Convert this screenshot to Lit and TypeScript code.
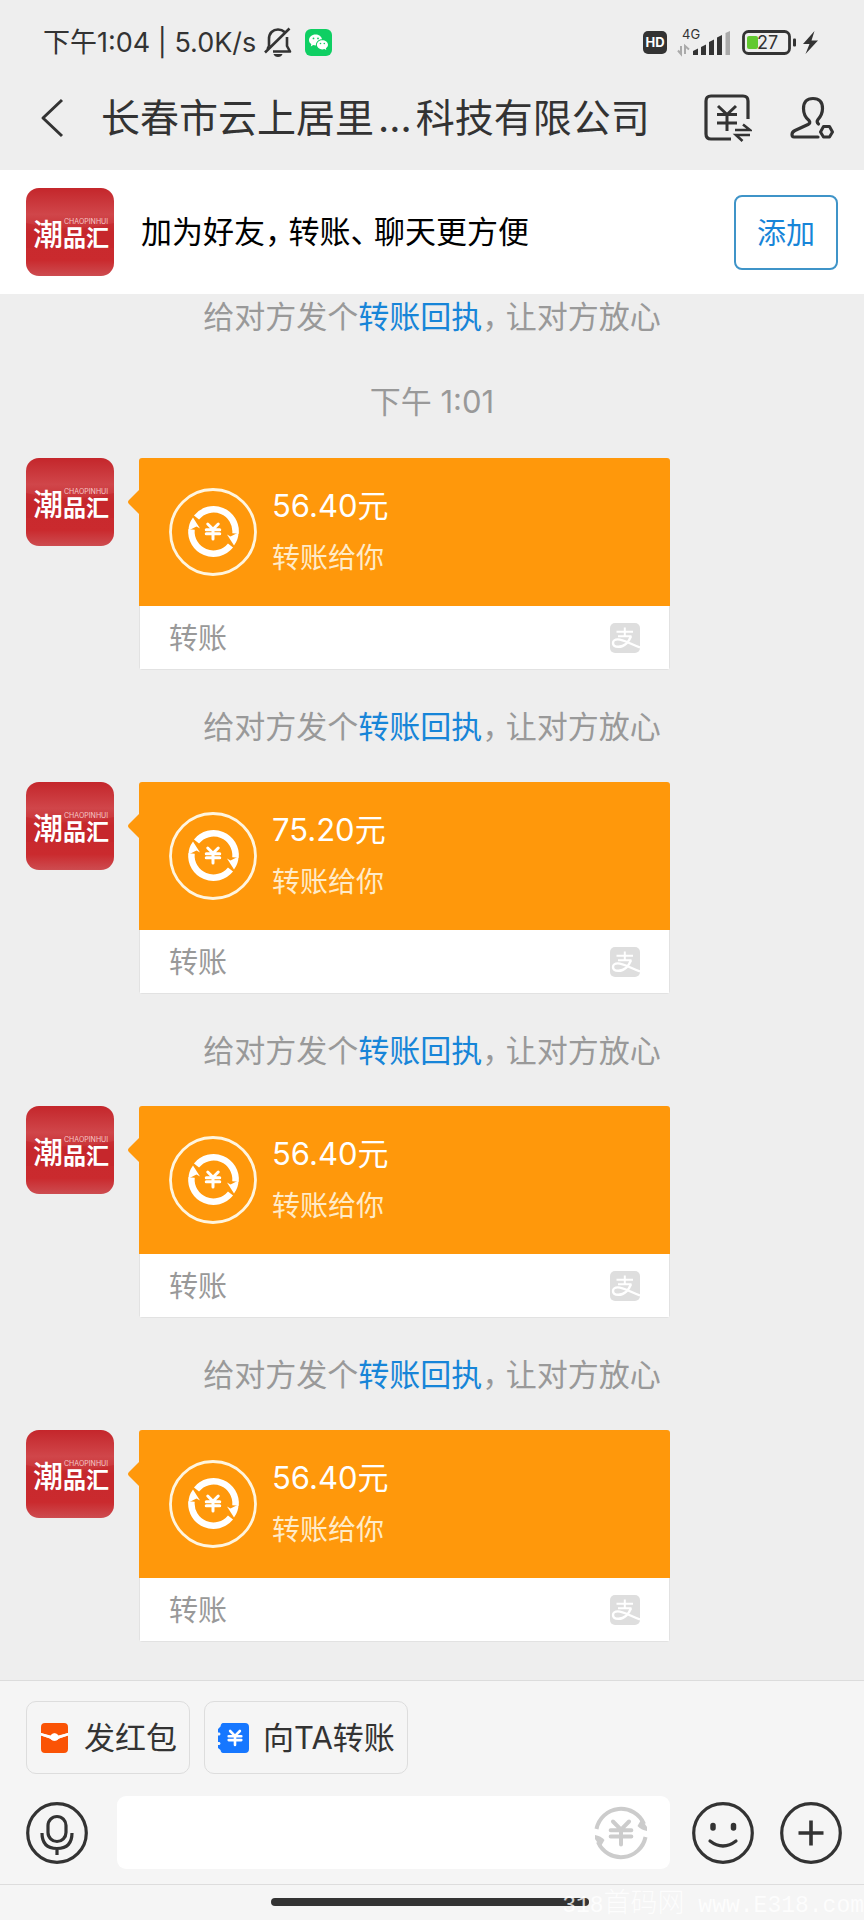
import { LitElement, html, css, svg } from "lit";
import { customElement, property, state } from "lit/decorators.js";

const yuan = (cx: number, cy: number, s: number, w: number) => svg`
  <path fill="none" stroke="currentColor" stroke-width=${w} stroke-linecap="round" stroke-linejoin="round"
    d="M${cx - 0.7 * s} ${cy - s}L${cx} ${cy - 0.3 * s}L${cx + 0.7 * s} ${cy - s}M${cx} ${cy - 0.3 * s}V${cy + s}M${cx - 0.9 * s} ${cy - 0.25 * s}H${cx + 0.9 * s}M${cx - 0.9 * s} ${cy + 0.3 * s}H${cx + 0.9 * s}"/>`;

@customElement("shop-avatar")
export class ShopAvatar extends LitElement {
  static styles = css`
    :host { display: block; flex: none; width: 88px; height: 88px; }
    svg { display: block; width: 100%; height: 100%; }
    .mark { fill: #fff; font-family: "Noto Sans CJK SC", sans-serif; }
    .tall { font-size: 30px; font-weight: 500; }
    .bold { font-size: 23px; font-weight: 700; }
    .latin { font-family: Inter, sans-serif; font-size: 7px; fill: #f6c9c9; }
  `;
  render() {
    return html`
      <svg viewBox="0 0 88 88" role="img" aria-label="潮品汇">
        <defs>
          <linearGradient id="base" x1="0" y1="0" x2="0" y2="1">
            <stop offset="0" stop-color="#c4262b" />
            <stop offset="0.3" stop-color="#d0464a" />
            <stop offset="0.42" stop-color="#cb383c" />
            <stop offset="0.5" stop-color="#c8292d" />
            <stop offset="0.82" stop-color="#ca2a2e" />
            <stop offset="1" stop-color="#cd4c50" />
          </linearGradient>
        </defs>
        <rect width="88" height="88" rx="13" fill="url(#base)" />
        <path d="M0 35Q44 46 88 35V60H0Z" fill="#c5262b" opacity="0.6" />
        <text class="mark tall" x="7" y="57">潮</text>
        <text class="mark bold" x="37" y="58">品</text>
        <text class="mark bold" x="60" y="58">汇</text>
        <text class="mark latin" x="38" y="36">CHAOPINHUI</text>
      </svg>`;
  }
}

@customElement("transfer-card")
export class TransferCard extends LitElement {
  @property() amount = "";
  static styles = css`
    :host { display: flex; align-items: flex-start; padding: 0 194px 0 26px; }
    .tail { display: block; flex: none; margin: 32px 0 0 14px; }
    .card { flex: 1; min-width: 0; border-radius: 3px; overflow: hidden; }
    .top { display: flex; align-items: center; gap: 15px; height: 148px; padding: 0 30px; background: #ff980b; color: #fff; }
    .top svg { display: block; flex: none; }
    .amount, .note { margin: 0; line-height: 53px; }
    .amount { font-size: 31px; }
    .note { font-size: 28px; color: #ffebc8; }
    .foot { display: flex; align-items: center; justify-content: space-between; height: 63px; padding: 0 29px; background: #fff;
      border: solid #e2e2e2; border-width: 0 1px 1px; box-sizing: content-box; font-size: 29px; line-height: 40px; color: #999; }
    .foot span { padding-top: 3px; }
    .foot svg { display: block; }
  `;
  render() {
    const half = svg`<path d="M-17 -14A22 22 0 0 1 22 2" fill="none" stroke="currentColor" stroke-width="6.5"/>
      <path d="M13.500 3L17 5L25 1Q25 8 20.500 14Z" fill="currentColor"/>`;
    return html`
      <shop-avatar></shop-avatar>
      <svg class="tail" width="11" height="24" viewBox="0 0 11 24"><path d="M11 0V24L1 14Q-1 12 1 10Z" fill="#ff980b" /></svg>
      <article class="card">
        <div class="top">
          <svg width="88" height="88" viewBox="0 0 88 88" aria-hidden="true">
            <circle cx="44" cy="44" r="42.500" fill="none" stroke="#fff5df" stroke-width="2.800" />
            <g transform="translate(44.500 43.500)">${half}<g transform="rotate(180)">${half}</g></g>
            ${yuan(44, 43.5, 7.5, 3)}
          </svg>
          <div>
            <p class="amount">${this.amount}元</p>
            <p class="note">转账给你</p>
          </div>
        </div>
        <div class="foot">
          <span>转账</span>
          <svg width="30" height="30" viewBox="0 0 30 30" aria-hidden="true">
            <rect width="30" height="30" rx="5" fill="#dedede" />
            <g fill="none" stroke="#fff" stroke-width="2">
              <path d="M6.500 8.800H23M14.800 4.500V13M8 13.300H21.500" />
              <path d="M21 13.300C19 18.500 14.500 23.800 8.500 23.800C4.500 23.800 3 21.800 3 19.900C3 17.900 5 16.400 7.800 16.400C13 16.400 18 19.800 30 24.500" stroke-width="2.400" />
            </g>
          </svg>
        </div>
      </article>`;
  }
}

@customElement("status-bar")
export class StatusBar extends LitElement {
  static styles = css`
    :host { display: flex; align-items: center; justify-content: space-between; height: 84px; padding: 0 46px 0 43px; color: #333; }
    .side { display: flex; align-items: center; }
    .clock { padding-top: 2px; font-size: 27px; line-height: 32px; white-space: pre; }
    svg { display: block; flex: none; overflow: visible; }
    .bell { margin: 0 12px 0 8px; }
    .hd { margin-right: 10px; }
    .signal { margin-right: 11px; }
    .battery { margin-right: 7px; }
    text { font-family: Inter, sans-serif; fill: #333; }
    .t-hd { font-size: 13px; font-weight: 700; fill: #fff; }
    .t-net { font-size: 13px; }
    .t-bat { font-size: 18px; }
  `;
  render() {
    return html`
      <div class="side">
        <span class="clock">下午1:04 | 5.0K/s</span>
        <svg class="bell" width="29" height="30" viewBox="0 0 29 30" fill="none" stroke="#333" stroke-width="2.600">
          <path d="M5 19V12C5 6 9 2.500 14 2.500C17 2.500 19 3.500 20.500 5M23 10V19L26 24.500H9M5 19L3.500 22M1 25.500L25.500 1.500" stroke-linejoin="round" />
          <path d="M9.500 27H18.500Q17.500 30 14 30Q10.500 30 9.500 27Z" fill="#333" stroke="none" />
        </svg>
        <svg width="27" height="27" viewBox="0 0 27 27" role="img" aria-label="微信">
          <rect width="27" height="27" rx="6" fill="#0fcf63" />
          <path d="M10.500 5.500C6.700 5.500 4 8 4 11C4 12.800 4.900 14.200 6.300 15.200L5.800 17.400L8.200 16.100C9 16.400 10 16.500 10.900 16.500C10.700 12.700 13.600 10.200 17 10.200C16.500 7.400 13.800 5.500 10.500 5.500Z" fill="#fff" />
          <path d="M17.300 11.200C14.200 11.200 11.900 13.300 11.900 15.800C11.900 18.400 14.300 20.400 17.300 20.400C18 20.400 18.700 20.300 19.400 20.100L21.300 21.100L20.900 19.300C22.200 18.400 23 17.200 23 15.800C23 13.300 20.500 11.200 17.300 11.200Z" fill="#fff" />
          <g fill="#0fcf63"><circle cx="8.500" cy="9.400" r="0.900" /><circle cx="13" cy="9.400" r="0.900" /><circle cx="15.500" cy="14.500" r="0.800" /><circle cx="19.300" cy="14.500" r="0.800" /></g>
        </svg>
      </div>
      <div class="side">
        <svg class="hd" width="24" height="23" viewBox="0 0 24 23">
          <rect width="24" height="23" rx="5" fill="#333" /><text class="t-hd" x="12" y="16.200" text-anchor="middle">HD</text>
        </svg>
        <svg class="signal" width="54" height="28" viewBox="0 0 54 28">
          <text class="t-net" x="5" y="11">4G</text>
          <path d="M4 18V26L1 22.500M8 26V18L12 21.500" fill="none" stroke="#aaa" stroke-width="2" />
          <g fill="#333"><path d="M16 27V23L21 20.500V27ZM24 27V19L29 16.500V27ZM32 27V14L37 11.500V27ZM40 27V9.500L45 7V27Z" /></g>
          <path d="M48.500 27V5L53 3V27Z" fill="#aaa" />
        </svg>
        <svg class="battery" width="54" height="25" viewBox="0 0 54 25">
          <rect x="1.500" y="1.500" width="46" height="22" rx="5" fill="none" stroke="#333" stroke-width="2.800" />
          <rect x="5" y="6" width="11" height="13" rx="2" fill="#62c930" />
          <rect x="51" y="8.500" width="3" height="8" rx="1" fill="#333" />
          <text class="t-bat" x="15" y="19">27</text>
        </svg>
        <svg width="15" height="23" viewBox="0 0 15 23"><path d="M11.500 0L0 13H6.500L2.500 23L15 9.500H8.500Z" fill="#333" /></svg>
      </div>`;
  }
}

@customElement("app-root")
export class AppRoot extends LitElement {
  @state() private amounts = ["56.40", "75.20", "56.40", "56.40"];

  static styles = css`
    :host { display: flex; flex-direction: column; position: relative; min-height: 100vh; overflow: hidden; background: #eee; color: #333;
      font-family: Inter, "Noto Sans CJK SC", sans-serif; }
    button { font: inherit; color: inherit; background: none; border: 0; padding: 0; cursor: pointer; }
    svg { display: block; flex: none; }
    .title-bar { display: flex; align-items: center; height: 68px; padding: 0 30px 18px 40px; }
    .title { flex: 1; min-width: 0; margin: 0 0 0 36px; font-size: 39px; font-weight: 400; line-height: 56px; white-space: nowrap; }
    .dots { margin: 0 4px; }
    .tools { display: flex; align-items: center; gap: 38px; }
    .friend { display: flex; align-items: center; height: 124px; padding: 0 26px; background: #fff; color: #000; }
    .friend p { flex: 1; margin: 0 0 0 27px; font-size: 31px; line-height: 44px; }
    .punct { font-feature-settings: "halt"; margin-right: 8px; }
    .add { box-sizing: border-box; height: 75px; padding: 0 21px 2px; border: 2px solid #3f94c8; border-radius: 8px; font-size: 29px; color: #1785d8; }
    .list { flex: 1; padding: 1px 0 38px; }
    .hint, .time { margin: 0; text-align: center; font-size: 31px; line-height: 44px; color: #999; }
    .time { margin: 41px 0 34px; }
    .hint a { color: #1785d8; text-decoration: none; }
    .between { margin: 35px 0 33px; }
    .composer { border-top: 1px solid #dcdcdc; background: #f5f5f5; }
    .quick { display: flex; gap: 14px; padding: 20px 26px 0; }
    .quick button { display: flex; align-items: center; gap: 14px; box-sizing: border-box; height: 73px; padding: 0 12px; border: 1px solid #ddd; border-radius: 10px; font-size: 31px; line-height: 44px; }
    .entry { display: flex; align-items: center; padding: 22px 22px 15px 26px; }
    .field { display: flex; align-items: center; flex: 1; min-width: 0; height: 73px; margin: 0 22px 0 29px; padding: 0 22px; border-radius: 9px; background: #fff; }
    .field input { flex: 1; min-width: 0; height: 44px; padding: 0; border: 0; outline: 0; background: none; font: inherit; font-size: 31px; }
    .field button { color: #ccc; }
    .faces { display: flex; gap: 26px; }
    .nav { display: flex; justify-content: center; height: 22px; padding: 13px 4px 0 0; border-top: 1px solid #ddd; background: #f5f5f5; }
    .handle { width: 37%; height: 8px; border-radius: 4px; background: #333; }
    .stamp { position: absolute; right: 0; bottom: 0; color: #fff; opacity: 0.8; font-family: "Liberation Mono", "Noto Sans CJK SC", monospace; font-size: 23px; line-height: 28px; font-weight: 400; white-space: pre; pointer-events: none; }
    .stamp span { font-size: 27px; font-weight: 300; }
  `;

  private hint(cls = "hint") {
    return html`<p class=${cls}>给对方发个<a href="#receipt">转账回执</a><span class="punct">，</span>让对方放心</p>`;
  }

  render() {
    const swap = svg`<path d="M-24.500 -4A25 25 0 0 1 23 -9" fill="none" stroke="currentColor" stroke-width="4"/>
      <path d="M16.500 -7L20.500 -14L26 -6V-2Q20 -3 16.500 -7Z" fill="currentColor"/>`;
    return html`
      <status-bar></status-bar>
      <header class="title-bar">
        <button aria-label="返回">
          <svg width="25" height="40" viewBox="0 0 25 40"><path d="M22 2L3 20L22 38" fill="none" stroke="#333" stroke-width="3" stroke-linejoin="round" /></svg>
        </button>
        <h1 class="title">长春市云上居里<span class="dots">…</span>科技有限公司</h1>
        <div class="tools">
          <button aria-label="转账记录">
            <svg width="48" height="48" viewBox="0 0 48 48" fill="none" stroke="#333" stroke-width="3.200">
              <path d="M44 25V7Q44 2 39 2H7Q2 2 2 7V40Q2 45 7 45H27" />
              <path d="M14 12L23 20.500L32 12M23 20.500V37M13 20.500H33M13 29H33" stroke-width="3" />
              <path d="M31 36H46L39 30.500M46 41H32L38.500 47" stroke-width="2.600" />
            </svg>
          </button>
          <button aria-label="聊天设置">
            <svg width="44" height="44" viewBox="0 0 44 44" fill="none" stroke="#333" stroke-width="3.200">
              <path d="M28 41H4Q2 41 2 38.500Q2 36 5 34.500L18 28.500Q21 27 19 24.500Q13.500 20 13.500 12.500Q13.500 2.500 23 2.500Q32.500 2.500 32.500 12.500Q32.500 18.500 28 23.500Q26 26 28.500 28" stroke-linecap="round" stroke-linejoin="round" />
              <path d="M33.500 30.500H39.500L42.500 36L39.500 41H33.500L30.500 36Z" stroke-width="3" stroke-linejoin="round" />
            </svg>
          </button>
        </div>
      </header>
      <section class="friend">
        <shop-avatar></shop-avatar>
        <p>加为好友<span class="punct">，</span>转账<span class="punct">、</span>聊天更方便</p>
        <button class="add">添加</button>
      </section>
      <main class="list">
        ${this.hint()}
        <p class="time">下午 1:01</p>
        ${this.amounts.map((a, i) => html`${i ? this.hint("hint between") : ""}<transfer-card .amount=${a}></transfer-card>`)}
      </main>
      <footer class="composer">
        <div class="quick">
          <button>
            <svg width="31" height="30" viewBox="0 0 31 30">
              <path d="M2 10V4Q2 0 6 0H25Q29 0 29 4V10L19.500 13A4.500 4.500 0 0 0 11.500 13Z" fill="#fa5305" />
              <path d="M2 12.500L11 15.500Q15.500 20 20 15.500L29 12.500V26Q29 30 25 30H6Q2 30 2 26Z" fill="#fa5305" />
              <path d="M2 10L11.500 12.500Q15.500 8 19.500 12.500L29 10V12.500L20 15.500Q15.500 20 11 15.500L2 12.500Z" fill="#fff" />
            </svg>
            发红包
          </button>
          <button>
            <svg width="32" height="30" viewBox="0 0 32 30" color="#fff">
              <path d="M6 0H28Q32 0 32 4V26Q32 30 28 30H6Q4 30 3.500 27L1 25V22H2.500Q4.500 20.500 2.500 19H1V12.500H2.500Q4.500 11 2.500 9.500H1V6L3.500 3.500Q4 0 6 0Z" fill="#1677ff" />
              ${yuan(18, 15, 7, 2.6)}
            </svg>
            向TA转账
          </button>
        </div>
        <div class="entry">
          <button aria-label="语音">
            <svg width="62" height="62" viewBox="0 0 62 62" fill="none" stroke="#333" stroke-width="3.200">
              <circle cx="31" cy="31" r="29.300" />
              <rect x="22" y="14.500" width="18" height="25" rx="9" />
              <path d="M16 31Q16 46.500 31 46.500Q46 46.500 46 31M31 46.500V53" />
            </svg>
          </button>
          <div class="field">
            <input type="text" aria-label="输入消息" />
            <button aria-label="转账">
              <svg width="54" height="54" viewBox="0 0 54 54">
                <g transform="translate(27 27)">${swap}<g transform="rotate(180)">${swap}</g></g>
                ${yuan(27, 27, 11.5, 4)}
              </svg>
            </button>
          </div>
          <div class="faces">
            <button aria-label="表情">
              <svg width="62" height="62" viewBox="0 0 62 62" fill="none" stroke="#333" stroke-width="3.200" stroke-linecap="round">
                <circle cx="31" cy="31" r="29.300" />
                <path d="M18 39Q31 49 44 39" />
                <path d="M21 23.500V26M41.500 23.500V26" stroke-width="5.500" />
              </svg>
            </button>
            <button aria-label="更多">
              <svg width="62" height="62" viewBox="0 0 62 62" fill="none" stroke="#333" stroke-width="3.200">
                <circle cx="31" cy="31" r="29.300" />
                <path d="M31 18.500V43.500M18.500 31H43.500" stroke-width="3.600" />
              </svg>
            </button>
          </div>
        </div>
      </footer>
      <div class="nav"><div class="handle"></div></div>
      <div class="stamp">318<span>首码网</span> www.E318.com</div>
    `;
  }
}
